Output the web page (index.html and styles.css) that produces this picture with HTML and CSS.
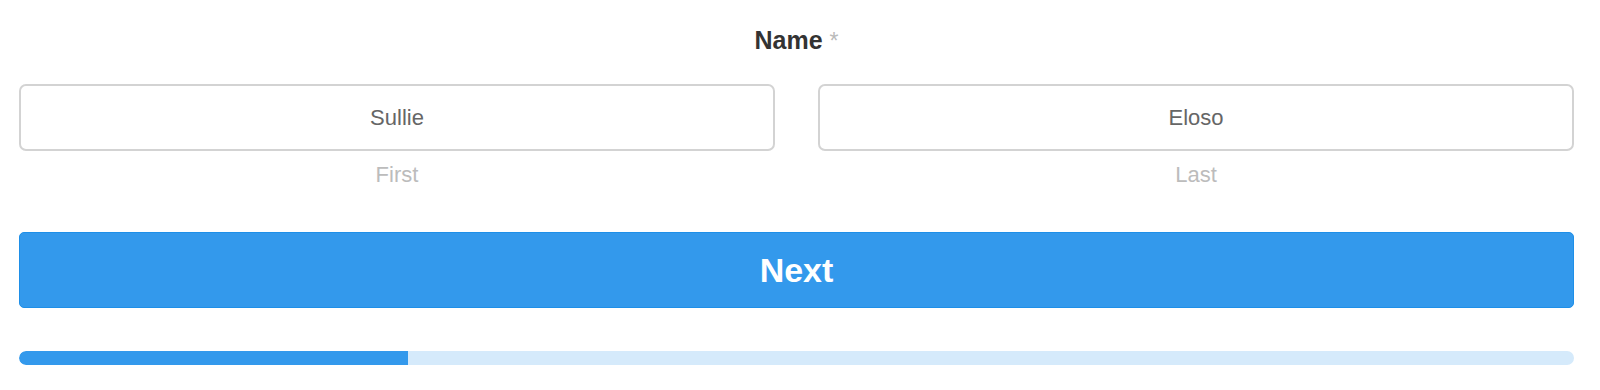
FILE: index.html
```html
<!DOCTYPE html>
<html>
<head>
<meta charset="utf-8">
<link rel="stylesheet" href="styles.css">
</head>
<body>
<div class="form">
  <div class="label">Name <span class="req">*</span></div>
  <div class="row">
    <div class="field">
      <div class="input">Sullie</div>
      <div class="sub">First</div>
    </div>
    <div class="field">
      <div class="input">Eloso</div>
      <div class="sub">Last</div>
    </div>
  </div>
  <button class="next">Next</button>
  <div class="progress"><div class="fill" style="width:25%"></div></div>
</div>
</body>
</html>
```
FILE: styles.css
```css
html, body { margin: 0; padding: 0; background: #fff; }
body { font-family: "Liberation Sans", Arial, sans-serif; }
.form { width: 1555px; margin-left: 19px; display: flex; flex-direction: column; }
.label { margin-top: 25px; height: 30px; line-height: 30px; font-size: 25px; font-weight: bold; color: #333; text-align: center; margin-bottom: 29px; }
.req { color: #bbb; font-weight: normal; font-size: 23px; }
.row { display: flex; gap: 43px; }
.field { flex: 1; display: flex; flex-direction: column; }
.input { box-sizing: border-box; height: 67px; border: 2px solid #d3d3d3; border-radius: 7px; display: flex; align-items: center; justify-content: center; font-size: 22px; color: #666; }
.sub { margin-top: 12px; height: 24px; line-height: 24px; font-size: 22px; color: #bcbcbc; text-align: center; }
.next { margin-top: 45px; box-sizing: border-box; height: 76px; width: 100%; border: 1px solid #1e8fe8; border-radius: 5px; background: #3399ec; color: #fff; font-family: "Liberation Sans", Arial, sans-serif; font-weight: bold; font-size: 34px; padding: 0; }
.progress { margin-top: 43px; height: 14px; border-radius: 7px; background: #d5eafb; overflow: hidden; }
.fill { height: 100%; background: #3399ec; border-radius: 7px 0 0 7px; }
```
